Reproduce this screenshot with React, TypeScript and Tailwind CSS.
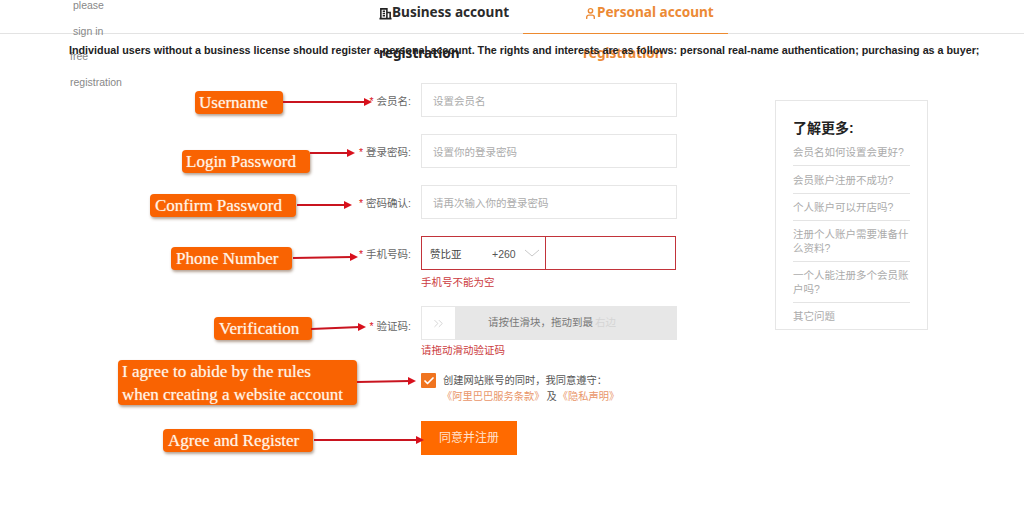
import { ChevronsRight, Check, User } from "lucide-react";

const cjk = "font-['Liberation_Sans','Noto_Sans_CJK_SC',sans-serif]";

const callouts = [
  { label: "Username", cls: "left-[195px] top-[91px] w-[88px] h-[23px] pl-[4px]" },
  { label: "Login Password", cls: "left-[182px] top-[150px] w-[128px] h-[23px] pl-[4px]" },
  { label: "Confirm Password", cls: "left-[150px] top-[194px] w-[146px] h-[23px] pl-[5px]" },
  { label: "Phone Number", cls: "left-[171px] top-[247px] w-[121px] h-[23px] pl-[5px]" },
  { label: "Verification", cls: "left-[214px] top-[317px] w-[98px] h-[23px] pl-[5px]" },
  { label: "Agree and Register", cls: "left-[163px] top-[429px] w-[150px] h-[23px] pl-[5px]" },
];

// annotation arrows drawn over the form: [x1, y1, x2, y2]
const arrows = [
  [283, 102, 372, 102],
  [310, 153, 355, 153],
  [297, 205, 352, 205],
  [293, 258, 358, 257],
  [311, 329, 366, 327],
  [357, 382, 416, 381],
  [314, 440, 424, 440],
];

const faq = [
  "会员名如何设置会更好?",
  "会员账户注册不成功?",
  "个人账户可以开店吗?",
  "注册个人账户需要准备什么资料?",
  "一个人能注册多个会员账户吗?",
  "其它问题",
];

function Row({ label, labelClass = "pt-[3px]", children }: { label: string; labelClass?: string; children: React.ReactNode }) {
  return (
    <div className="flex items-center">
      <div className={`w-[72px] pr-[10px] text-right text-[10.5px] text-[#666] whitespace-nowrap ${labelClass}`}>
        <span className="text-[#d9151b] mr-[3px]">*</span>
        {label}
      </div>
      {children}
    </div>
  );
}

function TextField({ placeholder }: { placeholder: string }) {
  return (
    <div className="flex h-[34px] w-[256px] items-center border border-[#e6e6e6] pl-[11px] pt-[3px] text-[10.5px] text-[#ababab]">
      {placeholder}
    </div>
  );
}

export default function App() {
  return (
    <div className={`relative h-[506px] w-[1024px] overflow-hidden bg-white ${cjk}`}>
      <div className="flex h-[34px] border-b border-[#e3e3e3] pl-[379px] font-['Noto_Sans',sans-serif] text-[13.6px] font-bold">
        <div className="flex w-[144px] items-start pt-[2px] text-[#2b2b2b]">
          <svg viewBox="0 0 14 14" className="mt-[5px] h-[13px] w-[13px]" fill="none" stroke="#222" strokeWidth="1.7">
            <path d="M2 12.5V2h6.5v10.5M0.5 12.5h13M8.5 6H12v6.5M4 4.5h2.5M4 7h2.5M4 9.5h2.5" />
          </svg>
          Business account
        </div>
        <div className="flex w-[205px] items-start pl-[61px] pt-[2px] text-[#ec8a35]">
          <User size={13} strokeWidth={2.6} className="mt-[5px]" />
          Personal account
        </div>
      </div>
      <div className="absolute left-[523px] top-[33px] h-px w-[205px] bg-[#ed8a2f]" />

      <div className="absolute left-[73px] top-[-7px] text-[10.5px] leading-[25.6px] text-[#888]">
        <div>please</div>
        <div>sign in</div>
        <div className="-ml-[3px]">free</div>
        <div className="-ml-[3px]">registration</div>
      </div>

      <div className="absolute left-[379px] top-[43px] font-['Noto_Sans',sans-serif] text-[13.6px] font-bold text-[#222]">
        registration
      </div>
      <div className="absolute left-[583px] top-[43px] font-['Noto_Sans',sans-serif] text-[13.6px] font-bold text-[#ec8a35]">
        registration
      </div>
      <div className="absolute left-[69px] top-[42px] whitespace-nowrap font-['Liberation_Sans',sans-serif] text-[10.75px] font-bold text-[#222]">
        Individual users without a business license should register a personal account. The rights and interests are as follows: personal real-name authentication; purchasing as a buyer;
      </div>

      <div className="flex pl-[349px] pt-[49px]">
        <div className="flex w-[426px] flex-col">
          <div className="flex flex-col gap-[17px]">
            <Row label="会员名:">
              <TextField placeholder="设置会员名" />
            </Row>
            <Row label="登录密码:">
              <TextField placeholder="设置你的登录密码" />
            </Row>
            <Row label="密码确认:">
              <TextField placeholder="请再次输入你的登录密码" />
            </Row>
            <Row label="手机号码:">
              <div className="flex h-[34px] w-[255px] border border-[#c2333a] text-[10.5px] text-[#444]">
                <div className="flex w-[124px] items-center border-r border-[#c2333a] pl-[8px] pt-[3px]">
                  <span className="w-[62px]">赞比亚</span>
                  <span className="text-[#555]">+260</span>
                  <svg viewBox="0 0 16 8" className="mb-[4px] ml-[8px] h-[8px] w-[16px]" fill="none" stroke="#c9c9c9">
                    <path d="M1 1l7 6 7-6" />
                  </svg>
                </div>
              </div>
            </Row>
          </div>
          <div className="ml-[72px] mt-[6px] text-[10.5px] leading-[13px] text-[#cc3b40]">手机号不能为空</div>

          <div className="mt-[17px]">
            <Row label="验证码:" labelClass="pt-[8px]">
              <div className="flex h-[34px] w-[256px] items-center bg-[#e7e7e7]">
                <div className="flex h-[34px] w-[35px] items-center justify-center border border-[#e7e7e7] bg-white text-[#bdbdbd]">
                  <ChevronsRight size={15} strokeWidth={1} />
                </div>
                <span className="ml-[32px] text-[10.5px] text-[#777]">请按住滑块，拖动到最</span>
                <span className="ml-[2px] text-[10.5px] text-[#d5d5d5]">右边</span>
              </div>
            </Row>
          </div>
          <div className="ml-[72px] mt-[4px] text-[10.5px] leading-[13px] text-[#cc3b40]">请拖动滑动验证码</div>

          <div className="ml-[72px] mt-[16px] flex">
            <div className="flex h-[15px] w-[15px] items-center justify-center rounded-[1px] bg-[#f0741f] text-white">
              <Check size={12} strokeWidth={3.5} />
            </div>
            <div className="ml-[7px] text-[10.25px] leading-[16px] text-[#555]">
              <div>创建网站账号的同时，我同意遵守：</div>
              <div className="-ml-[1px] flex">
                <span className="text-[#e9966a]">《阿里巴巴服务条款》</span>
                <span className="ml-[2px] mr-[1px]">及</span>
                <span className="text-[#e9966a]">《隐私声明》</span>
              </div>
            </div>
          </div>

          <div className="ml-[72px] mt-[16px] flex h-[34px] w-[96px] items-center justify-center bg-[#ff6a00] text-[12px] text-[#ffe3cf]">
            同意并注册
          </div>
        </div>

        <div className="mt-[17px] h-[230px] w-[153px] self-start border border-[#e6e6e6] px-[17px] pt-[19px]">
          <div className="text-[14px] font-bold leading-[17px] text-[#222]">了解更多:</div>
          <div className="mt-[2px] text-[10.5px] leading-[14px] text-[#ababab]">
            {faq.map((q, i) => (
              <div
                key={q}
                className={`pb-[6px] ${i === 1 ? "pt-[7px]" : "pt-[6px]"} ${i < faq.length - 1 ? "border-b border-[#e4e4e4]" : ""}`}
              >
                {q}
              </div>
            ))}
          </div>
        </div>
      </div>

      {callouts.map((c) => (
        <div
          key={c.label}
          className={`absolute flex items-center whitespace-nowrap rounded-[4px] bg-[#f96302] font-['Liberation_Serif',serif] text-[17px] text-[#fff3e6] shadow-[1px_2px_3px_rgba(90,50,20,0.45)] [text-shadow:0_0_1px_rgba(255,240,220,0.7)] ${c.cls}`}
        >
          {c.label}
        </div>
      ))}
      <div className="absolute left-[118px] top-[360px] h-[45px] w-[239px] rounded-[4px] bg-[#f96302] pl-[4px] font-['Liberation_Serif',serif] text-[17px] leading-[23px] text-[#fff3e6] shadow-[1px_2px_3px_rgba(90,50,20,0.45)] [text-shadow:0_0_1px_rgba(255,240,220,0.7)]">
        I agree to abide by the rules
        <br />
        when creating a website account
      </div>

      <svg className="pointer-events-none absolute left-0 top-0 h-[506px] w-[1024px]" viewBox="0 0 1024 506" fill="none">
        {arrows.map(([x1, y1, x2, y2]) => (
          <g key={`${x1}-${y1}`}>
            <line x1={x1} y1={y1} x2={x2 - 6} y2={y2} stroke="#c9141f" strokeWidth="1.8" />
            <path d={`M${x2} ${y2}L${x2 - 8} ${y2 - 4}V${y2 + 4}Z`} fill="#d8101c" />
          </g>
        ))}
      </svg>
    </div>
  );
}
